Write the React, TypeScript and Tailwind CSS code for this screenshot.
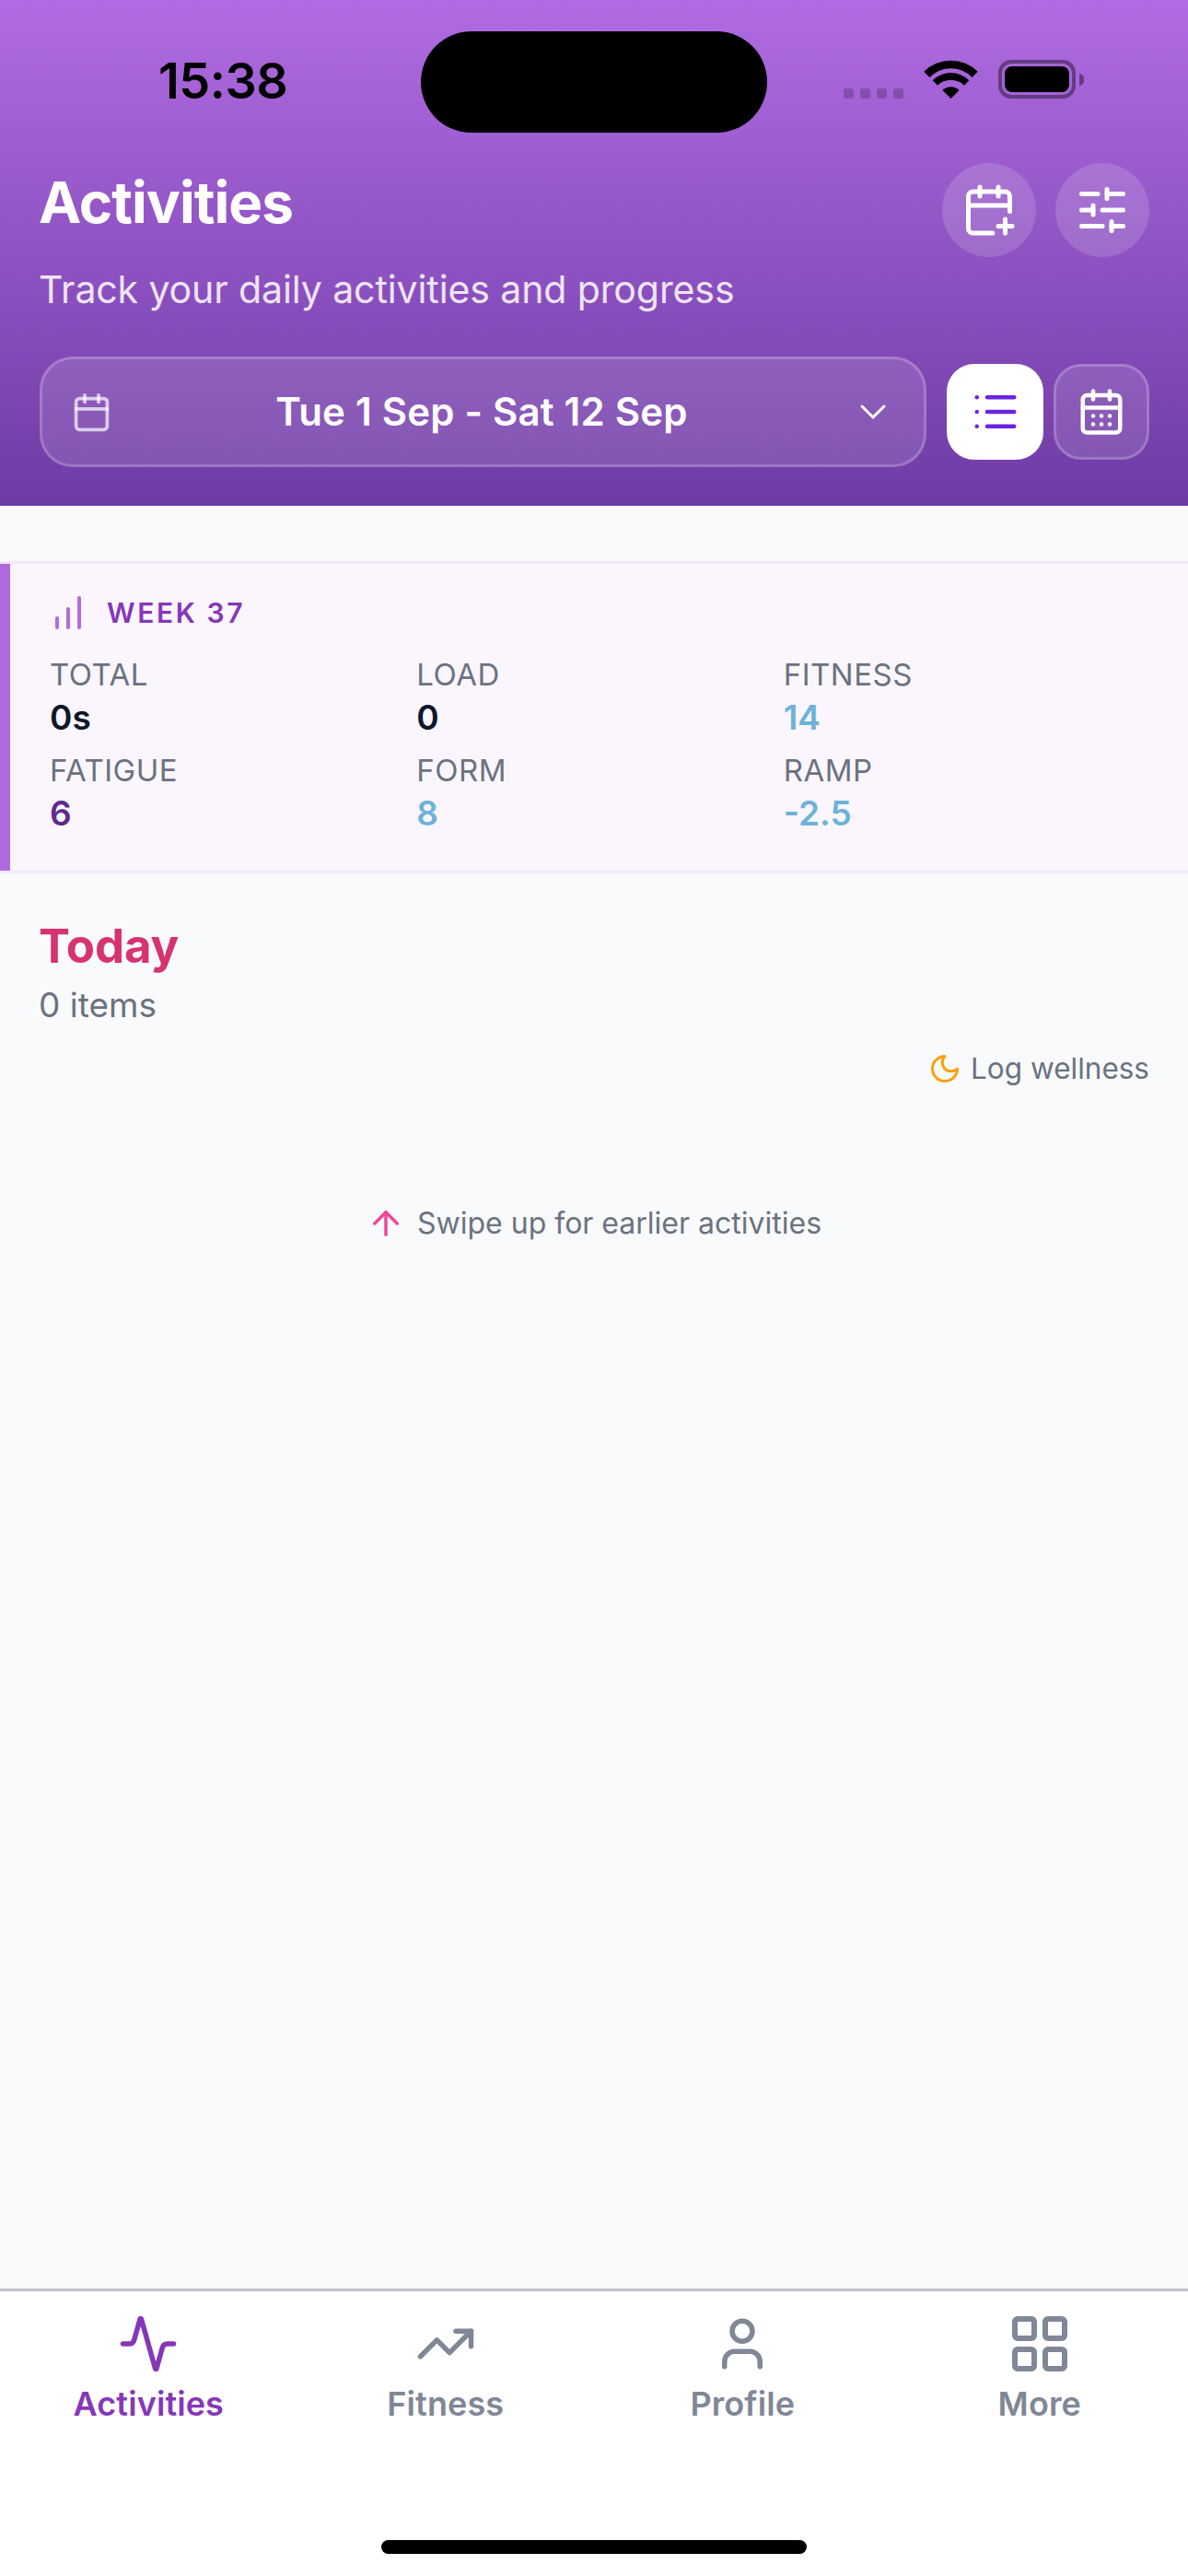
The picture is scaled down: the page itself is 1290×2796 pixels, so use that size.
import {
  Activity,
  ArrowUp,
  Calendar,
  CalendarDays,
  CalendarPlus,
  ChevronDown,
  LayoutGrid,
  List,
  SlidersHorizontal,
  TrendingUp,
  User,
} from 'lucide-react';

const stats = [
  { label: 'TOTAL', value: '0s', color: 'text-[#0f172a]' },
  { label: 'LOAD', value: '0', color: 'text-[#0f172a]' },
  { label: 'FITNESS', value: '14', color: 'text-[#6db3d8]' },
  { label: 'FATIGUE', value: '6', color: 'text-[#5f2a8c]' },
  { label: 'FORM', value: '8', color: 'text-[#6db3d8]' },
  { label: 'RAMP', value: '-2.5', color: 'text-[#6db3d8]' },
];

const StatusBar = () => (
  <div className="flex h-[110px] mt-[34px]">
    <div className="w-[457px] pl-[172px] pt-[20px] text-[54px] leading-[68px] font-semibold tracking-[-0.5px] text-black">15:38</div>
    <div className="w-[376px] h-[110px] rounded-[55px] bg-black" />
    <div className="flex items-end h-[42px] mt-[31px] pl-[83px]">
      <div className="flex gap-[7px]">
        <div className="w-[11px] h-[11px] rounded-[3px] bg-black/20" />
        <div className="w-[11px] h-[11px] rounded-[3px] bg-black/20" />
        <div className="w-[11px] h-[11px] rounded-[3px] bg-black/20" />
        <div className="w-[11px] h-[11px] rounded-[3px] bg-black/20" />
      </div>
      <svg className="ml-[22px]" width="59" height="42" viewBox="-1 0 59 42" fill="#000">
        <path d="M-.7 12.8A41.3 41.3 0 0 1 57.7 12.8L51.6 18.9A32.7 32.7 0 0 0 5.4 18.9Z" />
        <path d="M8.7 22.2A28 28 0 0 1 48.3 22.2L42.85 27.65A20.3 20.3 0 0 0 14.15 27.65Z" />
        <path d="M19.5 33A12.7 12.7 0 0 1 37.5 33L28.5 42Z" />
      </svg>
      <div className="ml-[22px] flex items-center gap-[4px]">
        <div className="w-[84px] h-[42px] p-[3px] rounded-[14px] border-[4px] border-black/40">
          <div className="w-full h-full rounded-[8px] bg-black" />
        </div>
        <div className="w-[5px] h-[13px] rounded-r-full bg-black/40" />
      </div>
    </div>
  </div>
);

const Header = () => (
  <header className="h-[549px] bg-[linear-gradient(180deg,#b16be2,#6e3ba4)]">
    <StatusBar />
    <div className="flex justify-between pl-[42px] pr-[42px] pt-[33px]">
      <div className="pt-[6px]">
        <h1 className="text-[62px] leading-[74px] font-bold text-white tracking-[-1px]">Activities</h1>
        <p className="mt-[28px] text-[41px] leading-[58px] tracking-[-0.1px] text-white/85">Track your daily activities and progress</p>
      </div>
      <div className="flex gap-[21px]">
        <button className="flex items-center justify-center w-[102px] h-[102px] rounded-full bg-white/15 text-white">
          <CalendarPlus size={60} />
        </button>
        <button className="flex items-center justify-center w-[102px] h-[102px] rounded-full bg-white/15 text-white">
          <SlidersHorizontal size={60} />
        </button>
      </div>
    </div>
    <div className="flex items-center gap-[22px] pl-[43px] pr-[42px] mt-[44px]">
      <button className="flex flex-1 items-center h-[120px] px-[31px] rounded-[36px] border-[3px] border-white/20 bg-white/[.12] text-white">
        <Calendar size={45} className="text-white/70" />
        <span className="flex-1 text-center text-[42px] leading-[48px] tracking-[0.2px] font-semibold">Tue 1 Sep - Sat 12 Sep</span>
        <ChevronDown size={48} strokeWidth={1.5} />
      </button>
      <div className="flex gap-[11px]">
        <button className="flex items-center justify-center w-[105px] h-[104px] rounded-[30px] bg-white text-[#6d22e0]">
          <List size={54} />
        </button>
        <button className="flex items-center justify-center w-[104px] h-[104px] rounded-[30px] border-[3px] border-white/20 bg-white/[.12] text-white">
          <CalendarDays size={54} />
        </button>
      </div>
    </div>
  </header>
);

const WeekCard = () => (
  <section className="mt-[60px] border-y-[3px] border-[#f3e8fd] bg-[#fbf6fe]">
    <div className="border-l-[11px] border-[#b06ae0] pl-[43px] pr-[41px] pt-[29px] pb-[39px]">
      <div className="flex items-center gap-[18px] ml-[-4px]">
        <svg width="48" height="48" viewBox="0 0 24 24" fill="none" stroke="#b06ae0" strokeWidth="2" strokeLinecap="round">
          <path d="M6 20v-5M12 20V10M18 20V4" />
        </svg>
        <span className="text-[30px] leading-[40px] font-semibold tracking-[2.6px] text-[#8637b8]">WEEK 37</span>
      </div>
      <div className="grid grid-cols-3 gap-y-[14px] mt-[23px]">
        {stats.map((s) => (
          <div key={s.label}>
            <div className="text-[33px] leading-[40px] tracking-[0.5px] text-[#6b7280]">{s.label}</div>
            <div className={`mt-[4px] text-[37px] leading-[46px] font-semibold ${s.color}`}>{s.value}</div>
          </div>
        ))}
      </div>
    </div>
  </section>
);

const tabs = [
  { label: 'Activities', icon: <Activity size={66} />, active: true },
  { label: 'Fitness', icon: <TrendingUp size={66} />, active: false },
  { label: 'Profile', icon: <User size={66} />, active: false },
  { label: 'More', icon: <LayoutGrid size={72} />, active: false },
];

const TabBar = () => (
  <nav className="flex flex-col justify-between h-[312px] pt-[21px] pb-[24px] border-t-[3px] border-[#c0c0d0] bg-white">
    <div className="grid grid-cols-4">
      {tabs.map((t) => (
        <div key={t.label} className={`flex flex-col items-center ${t.active ? 'text-[#8637b8]' : 'text-[#808796]'}`}>
          <div className="flex items-center justify-center h-[72px]">{t.icon}</div>
          <span className="mt-[7px] text-[36px] leading-[44px] tracking-[0.1px] font-semibold">{t.label}</span>
        </div>
      ))}
    </div>
    <div className="self-center w-[462px] h-[15px] rounded-full bg-black" />
  </nav>
);

export default function App() {
  return (
    <div className="flex flex-col h-[2796px] bg-[#f9fafc] [font-family:Inter,sans-serif]">
      <Header />
      <main className="flex-1">
        <WeekCard />
        <section className="pt-[48px] pl-[42px] pr-[42px]">
          <h2 className="text-[51px] leading-[62px] font-bold tracking-[-0.2px] text-[#d63372]">Today</h2>
          <p className="mt-[10px] text-[37px] leading-[46px] text-[#6b7280]">0 items</p>
          <div className="flex items-center justify-end gap-[10px] mt-[26px] h-[40px]">
            <svg width="36" height="36" viewBox="0 0 24 24" fill="none" stroke="#ff9f0a" strokeWidth="2" strokeLinecap="round" strokeLinejoin="round">
              <path d="M12 3a6 6 0 0 0 9 9 9 9 0 1 1-9-9Z" />
            </svg>
            <span className="text-[31.5px] leading-[40px] text-[#6b7280]">Log wellness</span>
          </div>
          <div className="flex items-center justify-center gap-[13px] mt-[127px] h-[42px]">
            <ArrowUp size={42} className="text-[#ec4899]" />
            <span className="text-[32px] leading-[42px] text-[#6b7280]">Swipe up for earlier activities</span>
          </div>
        </section>
      </main>
      <TabBar />
    </div>
  );
}
